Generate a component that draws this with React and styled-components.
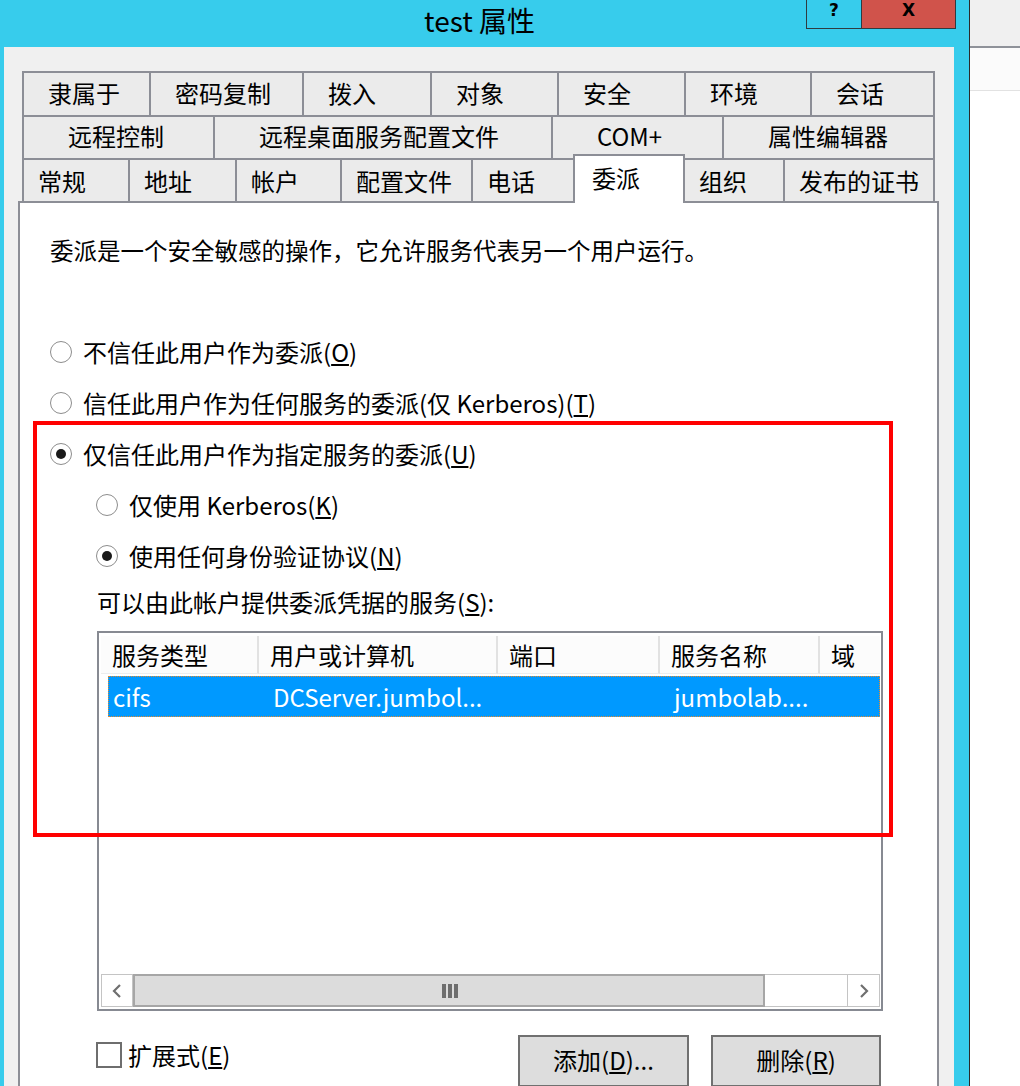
import React from "react";
import styled, { createGlobalStyle } from "styled-components";

const GlobalStyle = createGlobalStyle`
  html, body {
    margin: 0;
    padding: 0;
    overflow: hidden;
    background: #fff;
  }
  body {
    font-family: "Noto Sans CJK SC", "Noto Sans", sans-serif;
    color: #000;
  }
  * {
    box-sizing: border-box;
  }
`;

const ROW_END = 935;

const tabRows = [
  {
    height: 46,
    pad: 24,
    tabs: [
      ["隶属于", 22],
      ["密码复制", 149],
      ["拨入", 302],
      ["对象", 430],
      ["安全", 557],
      ["环境", 684],
      ["会话", 810],
    ],
  },
  {
    height: 45,
    pad: 44,
    tabs: [
      ["远程控制", 22],
      ["远程桌面服务配置文件", 213],
      ["COM+", 551],
      ["属性编辑器", 722],
    ],
  },
  {
    height: 43,
    pad: 14,
    front: true,
    tabs: [
      ["常规", 22],
      ["地址", 128],
      ["帐户", 235],
      ["配置文件", 340],
      ["电话", 471],
      ["委派", 573],
      ["组织", 683],
      ["发布的证书", 783],
    ],
  },
];

const columns = [
  { label: "服务类型", width: 158 },
  { label: "用户或计算机", width: 239 },
  { label: "端口", width: 162 },
  { label: "服务名称", width: 160 },
  { label: "域", width: 60 },
];

const services = [["cifs", "DCServer.jumbol...", "", "jumbolab....", ""]];

const App = () => {
  return (
    <Screen>
      <GlobalStyle />
      <Window>
        <TitleBar>
          <span />
          <Title>test 属性</Title>
          <Controls>
            <HelpBtn>
              <Glyph>?</Glyph>
            </HelpBtn>
            <CloseBtn>
              <Glyph>X</Glyph>
            </CloseBtn>
          </Controls>
        </TitleBar>

        <Panel>
          <TabStrip>
            {tabRows.map((row, r) => (
              <TabRow key={r} $h={row.height}>
                {row.tabs.map(([label, start], i) => {
                  const next = row.tabs[i + 1];
                  const width = next ? next[1] - start + 2 : ROW_END - start;
                  const selected = label === "委派";
                  return selected ? (
                    <ActiveTab key={label} $w={width}>
                      {label}
                    </ActiveTab>
                  ) : (
                    <Tab
                      key={label}
                      $w={width}
                      $h={row.height}
                      $pad={row.pad}
                      $open={row.front}
                    >
                      {label}
                    </Tab>
                  );
                })}
              </TabRow>
            ))}
          </TabStrip>

          <Pane>
            <Description>
              委派是一个安全敏感的操作，它允许服务代表另一个用户运行。
            </Description>

            <RadioGroup>
              <RadioRow>
                <Radio />
                <span>
                  不信任此用户作为委派(<u>O</u>)
                </span>
              </RadioRow>
              <RadioRow>
                <Radio />
                <span>
                  信任此用户作为任何服务的委派(仅 Kerberos)(<u>T</u>)
                </span>
              </RadioRow>
              <RadioRow>
                <Radio $checked />
                <span>
                  仅信任此用户作为指定服务的委派(<u>U</u>)
                </span>
              </RadioRow>
              <RadioRow $indent={46}>
                <Radio />
                <span>
                  仅使用 Kerberos(<u>K</u>)
                </span>
              </RadioRow>
              <RadioRow $indent={46}>
                <Radio $checked />
                <span>
                  使用任何身份验证协议(<u>N</u>)
                </span>
              </RadioRow>
            </RadioGroup>

            <Caption>
              可以由此帐户提供委派凭据的服务(<u>S</u>):
            </Caption>

            <ListBox>
              <HeaderRow>
                {columns.map((col) => (
                  <HeaderCell key={col.label} $w={col.width}>
                    {col.label}
                  </HeaderCell>
                ))}
              </HeaderRow>
              {services.map((row, r) => (
                <ItemRow key={r}>
                  {row.map((value, i) => (
                    <ItemCell
                      key={i}
                      $w={i === 0 ? columns[0].width - 7 : columns[i].width}
                      $pad={i === 0 ? 5 : 14}
                    >
                      {value}
                    </ItemCell>
                  ))}
                </ItemRow>
              ))}
              <Scrollbar>
                <ArrowBtn $w={32}>
                  <svg width="10" height="14" viewBox="0 0 10 14">
                    <polyline
                      points="8,1 2,7 8,13"
                      fill="none"
                      stroke="#6f6f6f"
                      strokeWidth="2.2"
                    />
                  </svg>
                </ArrowBtn>
                <Thumb>
                  <Grip>
                    <GripBar />
                    <GripBar />
                    <GripBar />
                  </Grip>
                </Thumb>
                <Trough />
                <ArrowBtn $w={33}>
                  <svg width="10" height="14" viewBox="0 0 10 14">
                    <polyline
                      points="2,1 8,7 2,13"
                      fill="none"
                      stroke="#6f6f6f"
                      strokeWidth="2.2"
                    />
                  </svg>
                </ArrowBtn>
              </Scrollbar>
            </ListBox>

            <BottomRow>
              <CheckBox />
              <CheckLabel>
                扩展式(<u>E</u>)
              </CheckLabel>
              <Buttons>
                <PushButton $w={171}>
                  添加(<u>D</u>)...
                </PushButton>
                <PushButton $w={170}>
                  删除(<u>R</u>)
                </PushButton>
              </Buttons>
            </BottomRow>

            <Highlight />
          </Pane>
        </Panel>
      </Window>

      <Divider />
      <Backdrop>
        <BackdropBar />
        <BackdropStrip />
      </Backdrop>
    </Screen>
  );
};

export default App;

const Screen = styled.div`
  width: 1020px;
  height: 1086px;
  display: flex;
  overflow: hidden;
`;

const Window = styled.div`
  width: 969px;
  height: 100%;
  background: #37ccec;
  display: flex;
  flex-direction: column;
`;

const TitleBar = styled.div`
  height: 47px;
  flex: 0 0 47px;
  display: grid;
  grid-template-columns: 1fr auto 1fr;
`;

const Title = styled.div`
  font-size: 28px;
  line-height: 41px;
  padding-right: 10px;
  white-space: nowrap;
`;

const Controls = styled.div`
  justify-self: end;
  align-self: start;
  margin-right: 13px;
  height: 29px;
  display: flex;
  border: 1px solid #2f3b40;
  border-top: none;
`;

const HelpBtn = styled.div`
  width: 54px;
  display: flex;
  justify-content: center;
  align-items: flex-start;
`;

const CloseBtn = styled.div`
  width: 94px;
  background: #d0534b;
  border-left: 1px solid #2f3b40;
  display: flex;
  justify-content: center;
  align-items: flex-start;
`;

const Glyph = styled.span`
  font-family: "DejaVu Sans", sans-serif;
  font-weight: bold;
  font-size: 17px;
  line-height: 21px;
`;

const Panel = styled.div`
  flex: 1;
  margin: 0 15px 0 4px;
  background: #f0f0f0;
  padding: 24px 15px 0 14px;
  display: flex;
  flex-direction: column;
`;

const TabStrip = styled.div`
  margin: 0 4px;
  display: flex;
  flex-direction: column;
`;

const TabRow = styled.div`
  display: flex;
  align-items: flex-end;
  height: ${(p) => p.$h}px;
  margin-top: -2px;

  &:first-child {
    margin-top: 0;
  }
`;

const Tab = styled.div`
  width: ${(p) => p.$w}px;
  height: ${(p) => p.$h}px;
  margin-left: -2px;
  border: 2px solid #8c8e96;
  border-bottom: ${(p) => (p.$open ? "none" : "2px solid #8c8e96")};
  background: #ebebeb;
  display: flex;
  align-items: center;
  padding: 0 0 ${(p) => (p.$open ? 0 : 3)}px ${(p) => p.$pad}px;
  font-size: 24px;
  line-height: 30px;
  white-space: nowrap;

  &:first-child {
    margin-left: 0;
  }
`;

const ActiveTab = styled.div`
  position: relative;
  z-index: 2;
  width: ${(p) => p.$w}px;
  height: 49px;
  margin-left: -2px;
  margin-bottom: -2px;
  border: 2px solid #8c8e96;
  border-bottom: none;
  background: #fff;
  display: flex;
  align-items: center;
  padding: 0 0 4px 17px;
  font-size: 24px;
  line-height: 30px;
`;

const Pane = styled.div`
  position: relative;
  width: 921px;
  flex: 1;
  border: 2px solid #8c8e96;
  border-bottom: none;
  background: #fff;
  padding: 31px 0 0 30px;
  display: flex;
  flex-direction: column;
`;

const Description = styled.div`
  font-size: 23.5px;
  line-height: 32px;
  white-space: nowrap;
`;

const RadioGroup = styled.div`
  margin-top: 60px;
  display: flex;
  flex-direction: column;
`;

const RadioRow = styled.div`
  height: 51px;
  display: flex;
  align-items: center;
  gap: 11px;
  padding-left: ${(p) => p.$indent || 0}px;
  font-size: 24px;
  line-height: 32px;
  white-space: nowrap;
`;

const Radio = styled.span`
  width: 22px;
  height: 22px;
  flex: 0 0 22px;
  border-radius: 50%;
  border: 1.5px solid #8d8d8d;
  background: #fff;
  display: flex;
  align-items: center;
  justify-content: center;

  &::after {
    content: "";
    width: 10px;
    height: 10px;
    border-radius: 50%;
    background: #1a1a1a;
    display: ${(p) => (p.$checked ? "block" : "none")};
  }
`;

const Caption = styled.div`
  margin: 5px 0 0 47px;
  font-size: 24px;
  line-height: 32px;
  white-space: nowrap;
`;

const ListBox = styled.div`
  margin: 13px 0 0 47px;
  width: 786px;
  height: 380px;
  border: 2px solid #878a92;
  padding: 3px 1px 2px 2px;
  display: flex;
  flex-direction: column;
`;

const HeaderRow = styled.div`
  height: 38px;
  display: flex;
`;

const HeaderCell = styled.div`
  width: ${(p) => p.$w}px;
  flex: 0 0 ${(p) => p.$w}px;
  background: #fcfcfc;
  border-right: 2px solid #e2e2e2;
  border-bottom: 1px solid #ededed;
  padding-left: 11px;
  display: flex;
  align-items: center;
  font-size: 24px;
  line-height: 30px;
  white-space: nowrap;
  overflow: hidden;

  &:last-child {
    border-right: none;
  }
`;

const ItemRow = styled.div`
  margin: 2px 0 0 7px;
  height: 41px;
  display: flex;
  background: #0099ff;
  outline: 1px dotted #e48a2c;
  outline-offset: -1px;
`;

const ItemCell = styled.div`
  width: ${(p) => p.$w}px;
  flex: 0 0 ${(p) => p.$w}px;
  padding-left: ${(p) => p.$pad}px;
  display: flex;
  align-items: center;
  color: #fff;
  font-size: 24px;
  line-height: 30px;
  white-space: nowrap;
  overflow: hidden;
`;

const Scrollbar = styled.div`
  margin-top: auto;
  height: 33px;
  display: flex;
`;

const ArrowBtn = styled.div`
  width: ${(p) => p.$w}px;
  flex: 0 0 ${(p) => p.$w}px;
  background: #fff;
  border: 1px solid #c4c4c4;
  display: flex;
  align-items: center;
  justify-content: center;
`;

const Thumb = styled.div`
  flex: 0 0 632px;
  background: #dcdcdc;
  border: 2px solid #a6a6a6;
  display: flex;
  align-items: center;
  justify-content: center;
`;

const Grip = styled.div`
  display: flex;
  gap: 2px;
  margin-left: 2px;
`;

const GripBar = styled.span`
  width: 4px;
  height: 14px;
  background: #6e6e6e;
`;

const Trough = styled.div`
  flex: 1;
  background: #fff;
  border-top: 1px solid #c4c4c4;
  border-bottom: 1px solid #c4c4c4;
`;

const BottomRow = styled.div`
  margin: 24px 0 0 46px;
  width: 787px;
  display: flex;
  align-items: flex-start;
`;

const CheckBox = styled.span`
  margin-top: 7px;
  width: 26px;
  height: 26px;
  flex: 0 0 26px;
  border: 2px solid #6e6e6e;
  background: #fff;
`;

const CheckLabel = styled.span`
  margin: 5px 0 0 6px;
  font-size: 24px;
  line-height: 30px;
  white-space: nowrap;
`;

const Buttons = styled.div`
  margin-left: auto;
  margin-right: 2px;
  display: flex;
  gap: 22px;
`;

const PushButton = styled.div`
  width: ${(p) => p.$w}px;
  height: 52px;
  background: #dddddd;
  border: 2px solid #707070;
  display: flex;
  align-items: center;
  justify-content: center;
  font-size: 24px;
  line-height: 30px;
  padding-bottom: 2px;
`;

const Highlight = styled.div`
  position: absolute;
  left: 13px;
  top: 218px;
  width: 860px;
  height: 416px;
  border: 4px solid #ff0000;
  pointer-events: none;
`;

const Divider = styled.div`
  width: 1px;
  flex: 0 0 1px;
  background: #2b2b2b;
`;

const Backdrop = styled.div`
  flex: 1;
  display: flex;
  flex-direction: column;
  background: #fff;
`;

const BackdropBar = styled.div`
  height: 48px;
  background: #f0f0f0;
  border-bottom: 2px solid #8f9299;
`;

const BackdropStrip = styled.div`
  height: 43px;
  background: #fbfbfb;
  border-bottom: 1px solid #e2e2e2;
`;
